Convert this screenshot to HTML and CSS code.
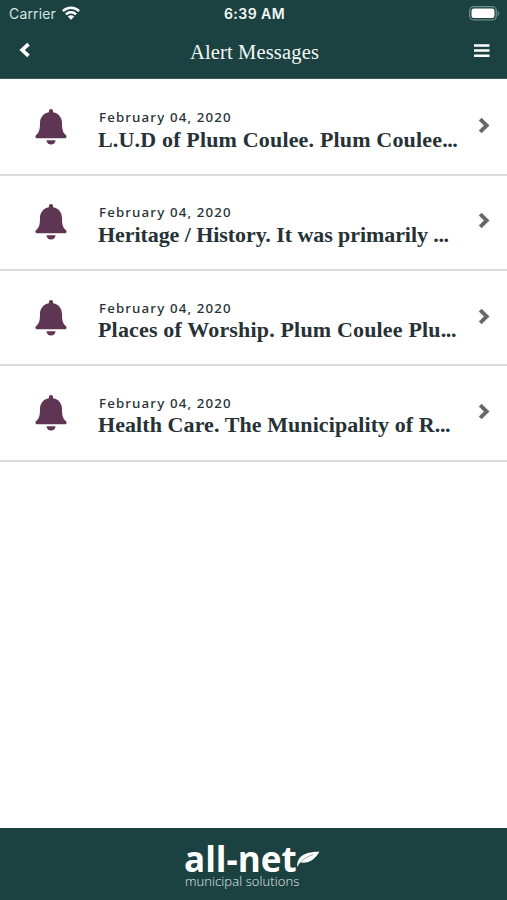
FILE: index.html
```html
<!DOCTYPE html>
<html lang="en">
<head>
<meta charset="utf-8">
<title>Alert Messages</title>
<link rel="stylesheet" href="styles.css">
</head>
<body>
<svg class="defs" aria-hidden="true">
  <symbol id="bell" viewBox="0 0 32 36">
    <path d="M16 0a2.100 2.100 0 0 1 2.100 2.100v1.100C23.600 4.200 27 8.300 27 14c0 7.500 1.300 9.700 3.800 12.100 1.500 1.500.7 3.100-1.100 3.100H2.300c-1.800 0-2.600-1.600-1.100-3.100C3.700 23.700 5 21.500 5 14 5 8.300 8.400 4.200 13.900 3.200V2.100A2.100 2.100 0 0 1 16 0z"/>
    <path d="M11.500 31.200h9a4.500 4.300 0 0 1-9 0z"/>
  </symbol>
  <symbol id="chevron" viewBox="0 0 12 17">
    <path d="M2.200 2.200 8.700 8.500 2.200 14.800" fill="none" stroke="currentColor" stroke-width="3.900"/>
  </symbol>
</svg>
<div class="screen">
  <header class="header">
    <div class="status">
      <div class="carrier"><span>Carrier</span>
        <svg class="wifi" viewBox="0 0 18 14"><g fill="none" stroke="#fff" stroke-width="2.400"><path d="M.9 5.100a11.600 11.600 0 0 1 16.200 0"/><path d="M3.900 8.300a7.300 7.300 0 0 1 10.200 0"/></g><path d="M9 13.800 5.800 10.600a4.600 4.600 0 0 1 6.400 0z" fill="#fff"/></svg>
      </div>
      <span class="clock">6:39 AM</span>
      <svg class="battery" viewBox="0 0 31 15"><rect x=".7" y=".7" width="26.600" height="13.200" rx="4" fill="none" stroke="#6f8b89" stroke-width="1.300"/><rect x="2.500" y="2.500" width="23" height="9.600" rx="2.300" fill="#fff"/><path d="M28.700 5c2 .8 2 4 0 4.800z" fill="#6f8b89"/></svg>
    </div>
    <nav class="nav">
      <svg class="back" viewBox="0 0 12 16"><path d="M9.500 2.200 3.200 8l6.300 5.800" fill="none" stroke="#fff" stroke-width="3.700"/></svg>
      <h1 class="title">Alert Messages</h1>
      <svg class="menu" viewBox="0 0 16 14"><path d="M0 1.500h15.500M0 6.500h15.500M0 11.700h15.500" stroke="#fff" stroke-width="2.500"/></svg>
    </nav>
  </header>
  <main class="list">
    <article class="row"><svg class="bell"><use href="#bell"/></svg><div class="copy"><time class="date">February 04, 2020</time><h2 class="message m1">L.U.D of Plum Coulee. Plum Coulee<span class="dots">...</span></h2></div><svg class="chevron"><use href="#chevron"/></svg></article>
    <article class="row"><svg class="bell"><use href="#bell"/></svg><div class="copy"><time class="date">February 04, 2020</time><h2 class="message m2">Heritage / History. It was primarily <span class="dots">...</span></h2></div><svg class="chevron"><use href="#chevron"/></svg></article>
    <article class="row"><svg class="bell"><use href="#bell"/></svg><div class="copy"><time class="date">February 04, 2020</time><h2 class="message m3">Places of Worship. Plum Coulee Plu<span class="dots">...</span></h2></div><svg class="chevron"><use href="#chevron"/></svg></article>
    <article class="row"><svg class="bell"><use href="#bell"/></svg><div class="copy"><time class="date">February 04, 2020</time><h2 class="message m4">Health Care. The Municipality of R<span class="dots">...</span></h2></div><svg class="chevron"><use href="#chevron"/></svg></article>
  </main>
  <footer class="footer">
    <div class="logo">
      <div class="brand"><span>all-net</span><svg class="leaf" viewBox="0 0 24 18"><path d="M1.200 16C1 7 6 .8 23.500.8 19 8 14 12.500 4.500 11.600 3 13 2 14.500 1.200 16z" fill="#fff"/><path d="M2 15C4 10.500 9 6.500 17 3.500" fill="none" stroke="#6f8b89" stroke-width=".7"/></svg></div>
      <div class="tagline">municipal solutions</div>
    </div>
  </footer>
</div>
</body>
</html>
```
FILE: styles.css
```css
* { box-sizing: border-box; }
body { margin: 0; background: #fff; }
.defs { display: none; }
.screen { display: flex; flex-direction: column; width: 507px; height: 900px; overflow: hidden; }
.header { height: 79px; flex: none; background: #1b4241; color: #f4f8f7; border-bottom: 1px solid #35605d; }
.status { display: grid; grid-template-columns: 1fr auto 1fr; align-items: center; height: 27px; padding: 0 7px 0 9px; font: 14px/20px Inter, sans-serif; }
.carrier { display: flex; align-items: center; gap: 6px; letter-spacing: .15px; color: #d9e3e1; }
.wifi { width: 18px; height: 14px; margin-top: -1px; }
.clock { font-weight: 600; font-size: 14px; letter-spacing: .45px; }
.battery { width: 31px; height: 15px; justify-self: end; }
.nav { display: grid; grid-template-columns: 1fr auto 1fr; align-items: center; height: 48px; padding: 0 17px 0 19px; }
.back { width: 12px; height: 16px; margin-top: -2px; }
.title { margin: 0; padding-top: 1px; font: 400 20.500px/26px "Liberation Serif", serif; letter-spacing: .15px; }
.menu { width: 16px; height: 14px; justify-self: end; }
.list { flex: 1; padding-top: 1.500px; }
.row { display: flex; height: 95.300px; border-bottom: 2px solid #dcdcdc; padding: 27.500px 17px 0 35px; }
.bell { width: 32px; height: 36px; flex: none; fill: #5e3653; margin-top: 1px; }
.copy { flex: 1; min-width: 0; padding-left: 31px; color: #263235; }
.date { display: block; padding-left: 1px; font: 500 13.300px/18px "Noto Sans", sans-serif; letter-spacing: 1.150px; white-space: nowrap; }
.message { margin: 0; padding-top: .5px; font: 700 22px/26px "Liberation Serif", serif; white-space: nowrap; }
.m1 { letter-spacing: .17px; }
.m2 { letter-spacing: -.07px; }
.m3 { letter-spacing: .17px; }
.m4 { letter-spacing: .08px; }
.dots { letter-spacing: -.4px; }
.chevron { width: 12px; height: 17px; flex: none; margin-top: 9px; color: #68686a; }
.footer { height: 72px; flex: none; background: #1b4241; color: #fff; padding: 16px 0 0 184px; }
.brand { display: flex; height: 29px; font: 700 35px/29px "Open Sans", sans-serif; letter-spacing: 0; }
.leaf { width: 24px; height: 18px; margin: 7px 0 0 -1px; }
.tagline { padding-left: 1px; font: 300 13px/16px "Open Sans", sans-serif; color: #e4ecea; letter-spacing: .08px; }
```
